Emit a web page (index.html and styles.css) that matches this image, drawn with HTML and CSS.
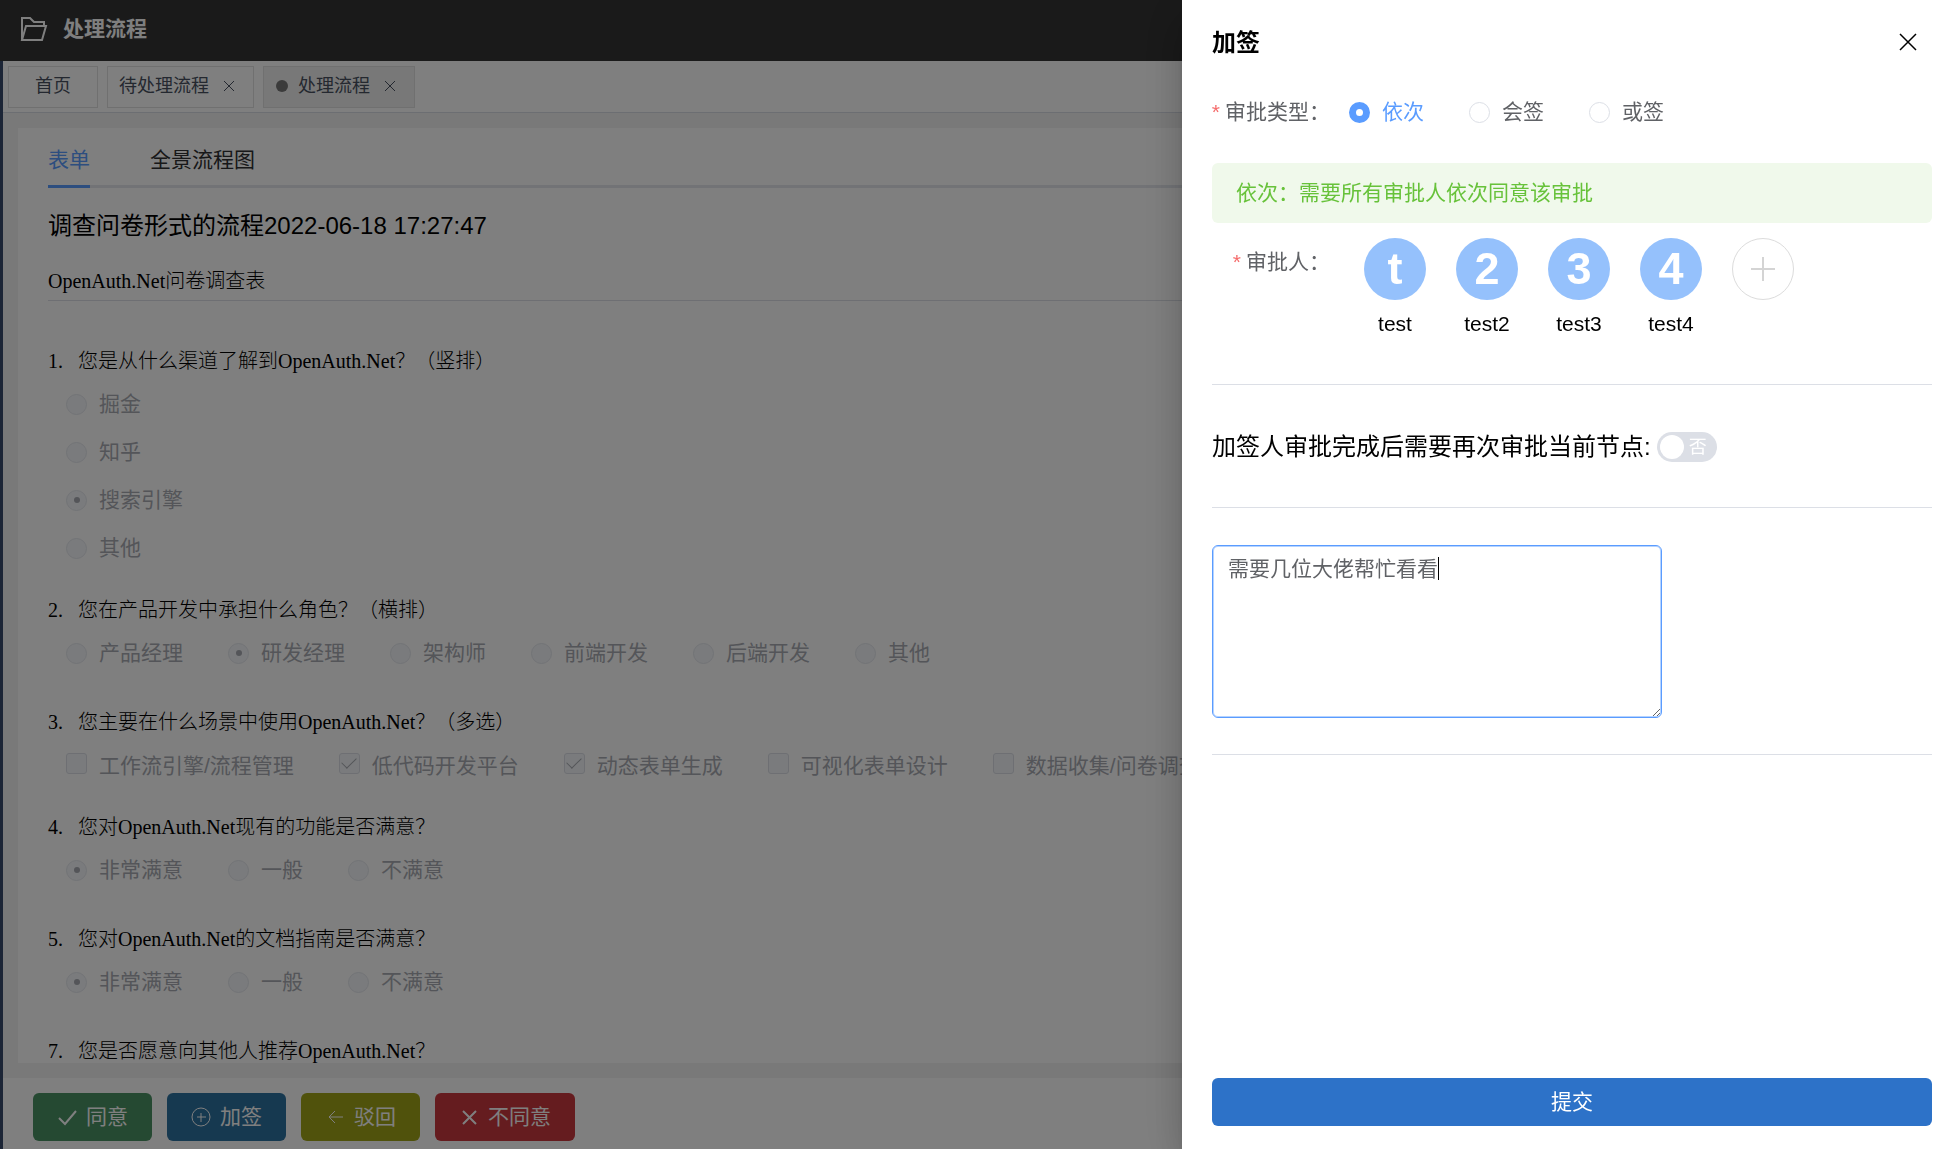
FILE: index.html
```html
<!DOCTYPE html>
<html lang="zh-CN">
<head>
<meta charset="utf-8">
<meta name="viewport" content="width=device-width, initial-scale=1">
<title>处理流程</title>
<link rel="stylesheet" href="styles.css">
</head>
<body>
<div class="app">
  <header class="topbar">
    <svg class="topbar-icon" viewBox="0 0 28 28" fill="none" stroke="currentColor" stroke-width="2" aria-hidden="true"><path d="M2 25V3h8l4 4h10v4M2 25l4-14h20l-4 14z"/></svg>
    <h1 class="topbar-title">处理流程</h1>
  </header>
  <div class="body">
    <aside class="sidebar"></aside>
    <main class="main">
      <nav class="tags">
        <a class="tag tag-home" href="#">首页</a>
        <a class="tag" href="#">待处理流程<svg class="tag-close" viewBox="0 0 12 12" aria-hidden="true"><path d="M1 1l10 10M11 1L1 11"/></svg></a>
        <a class="tag tag-active" href="#"><span class="tag-dot"></span>处理流程<svg class="tag-close" viewBox="0 0 12 12" aria-hidden="true"><path d="M1 1l10 10M11 1L1 11"/></svg></a>
      </nav>
      <section class="content">
        <div class="card">
          <div class="tabs">
            <button class="tab tab-active" type="button">表单</button>
            <button class="tab" type="button">全景流程图</button>
          </div>
          <h2 class="flow-title">调查问卷形式的流程2022-06-18 17:27:47</h2>
          <p class="form-title">OpenAuth.Net问卷调查表</p>
          <fieldset class="question question-stacked">
            <legend class="ask"><span class="num">1.</span>您是从什么渠道了解到OpenAuth.Net？（竖排）</legend>
            <div class="options options-column">
              <label class="option"><input type="radio" name="q1" disabled>掘金</label>
              <label class="option"><input type="radio" name="q1" disabled>知乎</label>
              <label class="option"><input type="radio" name="q1" disabled checked>搜索引擎</label>
              <label class="option"><input type="radio" name="q1" disabled>其他</label>
            </div>
          </fieldset>
          <fieldset class="question">
            <legend class="ask"><span class="num">2.</span>您在产品开发中承担什么角色？（横排）</legend>
            <div class="options">
              <label class="option"><input type="radio" name="q2" disabled>产品经理</label>
              <label class="option"><input type="radio" name="q2" disabled checked>研发经理</label>
              <label class="option"><input type="radio" name="q2" disabled>架构师</label>
              <label class="option"><input type="radio" name="q2" disabled>前端开发</label>
              <label class="option"><input type="radio" name="q2" disabled>后端开发</label>
              <label class="option"><input type="radio" name="q2" disabled>其他</label>
            </div>
          </fieldset>
          <fieldset class="question question-check">
            <legend class="ask"><span class="num">3.</span>您主要在什么场景中使用OpenAuth.Net？（多选）</legend>
            <div class="options">
              <label class="option"><input type="checkbox" disabled>工作流引擎/流程管理</label>
              <label class="option"><input type="checkbox" disabled checked>低代码开发平台</label>
              <label class="option"><input type="checkbox" disabled checked>动态表单生成</label>
              <label class="option"><input type="checkbox" disabled>可视化表单设计</label>
              <label class="option"><input type="checkbox" disabled>数据收集/问卷调查</label>
            </div>
          </fieldset>
          <fieldset class="question">
            <legend class="ask"><span class="num">4.</span>您对OpenAuth.Net现有的功能是否满意？</legend>
            <div class="options">
              <label class="option"><input type="radio" name="q4" disabled checked>非常满意</label>
              <label class="option"><input type="radio" name="q4" disabled>一般</label>
              <label class="option"><input type="radio" name="q4" disabled>不满意</label>
            </div>
          </fieldset>
          <fieldset class="question">
            <legend class="ask"><span class="num">5.</span>您对OpenAuth.Net的文档指南是否满意？</legend>
            <div class="options">
              <label class="option"><input type="radio" name="q5" disabled checked>非常满意</label>
              <label class="option"><input type="radio" name="q5" disabled>一般</label>
              <label class="option"><input type="radio" name="q5" disabled>不满意</label>
            </div>
          </fieldset>
          <fieldset class="question">
            <legend class="ask"><span class="num">7.</span>您是否愿意向其他人推荐OpenAuth.Net？</legend>
          </fieldset>
        </div>
      </section>
      <footer class="actions">
        <button class="btn btn-agree" type="button"><svg viewBox="0 0 21 21" stroke-width="2" aria-hidden="true"><path d="M2 11l6 6L19 4"/></svg>同意</button>
        <button class="btn btn-sign" type="button"><svg viewBox="0 0 21 21" stroke-width="1" aria-hidden="true"><circle cx="10" cy="10" r="9"/><path d="M6 10h9M10 6v9"/></svg>加签</button>
        <button class="btn btn-back" type="button"><svg viewBox="0 0 21 21" stroke-width="1" aria-hidden="true"><path d="M18 10H4M10 4l-6 6 6 6"/></svg>驳回</button>
        <button class="btn btn-deny" type="button"><svg viewBox="0 0 21 21" stroke-width="2" aria-hidden="true"><path d="M4 4l13 13M17 4L4 17"/></svg>不同意</button>
      </footer>
    </main>
  </div>
</div>

<div class="mask">
  <form class="drawer">
    <div class="drawer-head">
      <h2 class="drawer-title">加签</h2>
      <button class="close" type="button" aria-label="关闭"><svg viewBox="0 0 18 18" aria-hidden="true"><path d="M1 1l16 16M17 1L1 17"/></svg></button>
    </div>
    <div class="row" role="radiogroup" aria-labelledby="type-label">
      <span class="label" id="type-label"><span class="star">*</span>审批类型：</span>
      <div class="choices">
        <label class="choice"><input type="radio" name="type" checked><span>依次</span></label>
        <label class="choice"><input type="radio" name="type"><span>会签</span></label>
        <label class="choice"><input type="radio" name="type"><span>或签</span></label>
      </div>
    </div>
    <p class="tip">依次：需要所有审批人依次同意该审批</p>
    <div class="row row-people">
      <span class="label"><span class="star">*</span>审批人：</span>
      <ul class="people">
        <li class="person"><span class="avatar">t</span>test</li>
        <li class="person"><span class="avatar">2</span>test2</li>
        <li class="person"><span class="avatar">3</span>test3</li>
        <li class="person"><span class="avatar">4</span>test4</li>
        <li class="person"><button class="add" type="button" aria-label="添加审批人"><svg viewBox="0 0 24 24" aria-hidden="true"><path d="M0 12h24M12 0v24"/></svg></button></li>
      </ul>
    </div>
    <div class="again">
      <label for="again">加签人审批完成后需要再次审批当前节点:</label>
      <span class="switch"><input type="checkbox" role="switch" id="again"><span class="switch-text">否</span></span>
    </div>
    <div class="note">
      <textarea class="note-input" aria-label="加签说明">需要几位大佬帮忙看看</textarea>
      <span class="caret"></span>
    </div>
    <button class="submit" type="submit">提交</button>
  </form>
</div>
</body>
</html>
```
FILE: styles.css
```css
* { box-sizing: border-box; }
body {
  margin: 0;
  font: 21px/24px "Liberation Sans", "Noto Sans CJK SC", sans-serif;
  color: #000;
}
h1, h2, p, ul, fieldset { margin: 0; padding: 0; border: 0; }
ul { list-style: none; }
button, textarea, input { font: inherit; margin: 0; }
a { color: inherit; text-decoration: none; }
svg { fill: none; stroke: currentColor; flex: none; }

.app { height: 100vh; display: flex; flex-direction: column; overflow: hidden; }
.topbar {
  height: 61px;
  flex: none;
  display: flex;
  align-items: center;
  gap: 15px;
  padding: 0 20px 4px;
  background: #343434;
  color: #fff;
}
.topbar-icon { width: 28px; height: 28px; }
.topbar-title { font-size: 21px; line-height: 24px; }
.body { flex: 1; display: flex; min-height: 0; }
.sidebar { width: 3px; flex: none; background: #384a6c; }
.main { flex: 1; min-width: 0; display: flex; flex-direction: column; }

.tags {
  flex: none;
  display: flex;
  gap: 9px;
  padding: 5px;
  height: 52px;
  border-bottom: 1px solid #d8dce5;
  background: #fff;
}
.tag {
  height: 42px;
  display: flex;
  align-items: center;
  padding: 0 18px 2px 11px;
  border: 1px solid #e0e0e0;
  font-size: 18px;
  color: #495060;
}
.tag-home { padding: 0 26px 2px; }
.tag-active { background: #f0f0f0; }
.tag-dot { width: 12px; height: 12px; border-radius: 50%; background: #777; margin: 0 10px 0 1px; }
.tag-close { width: 12px; height: 12px; margin-left: 14px; stroke-width: 1; }

.content { flex: 1; min-height: 0; padding: 15px; background: #f2f2f2; }
.card { height: 100%; overflow: hidden; background: #fff; padding: 0 30px; }
.tabs { display: flex; gap: 60px; height: 60px; border-bottom: 3px solid #e4e7ed; }
.tab {
  height: 60px;
  padding: 6px 0 0;
  border: 0;
  border-bottom: 3px solid transparent;
  background: none;
  color: #303133;
}
.tab-active { color: #5a9cff; border-color: #5a9cff; }
.flow-title { font-size: 24px; line-height: 30px; font-weight: 400; margin-top: 23px; }
.form-title {
  font: 300 20px/24px "Liberation Serif", "Noto Sans CJK SC", serif;
  padding: 28px 0 7px;
  border-bottom: 1px solid #dcdfe6;
  margin-bottom: 40px;
}
.question { margin-bottom: 25px; }
.question-stacked { margin-bottom: 18px; }
.question-check { margin-bottom: 18px; }
.ask { font: 300 20px/40px "Liberation Serif", "Noto Sans CJK SC", serif; padding: 0; }
.num { display: inline-block; width: 30px; }
.options { display: flex; gap: 45px; margin-top: -1px; padding-left: 18px; }
.options-column { flex-direction: column; gap: 0; }
.option {
  display: flex;
  align-items: center;
  gap: 12px;
  height: 48px;
  flex: none;
  white-space: nowrap;
  color: #a8abb2;
}
.option input {
  appearance: none;
  width: 21px;
  height: 21px;
  display: grid;
  place-items: center;
  border: 1px solid #e4e7ed;
  border-radius: 50%;
  background: #f5f7fa;
}
.question-check .option { padding-top: 2px; }
.option input[type="checkbox"] { margin-bottom: 6px; border-color: #dcdfe6; border-radius: 3px; }
.option input[type="radio"]:checked::before {
  content: "";
  width: 6px;
  height: 6px;
  border-radius: 50%;
  background: #a8abb2;
}
.option input[type="checkbox"]:checked::before {
  content: "";
  width: 7px;
  height: 13px;
  margin-bottom: 4px;
  border: solid #a8abb2;
  border-width: 0 1px 1px 0;
  transform: rotate(45deg);
}

.actions { flex: none; display: flex; gap: 15px; height: 71px; padding: 15px 30px 8px; background: #fff; }
.btn {
  height: 48px;
  display: flex;
  align-items: center;
  gap: 8px;
  padding: 0 24px;
  border: 0;
  border-radius: 6px;
  color: #fff;
  white-space: nowrap;
}
.btn svg { width: 21px; height: 21px; }
.btn-agree { background: #4a9264; }
.btn-sign { background: #2d72a0; }
.btn-back { background: #a0a418; }
.btn-deny { background: #ca383e; }

.mask { position: fixed; inset: 0; display: flex; justify-content: flex-end; background: rgba(0, 0, 0, 0.5); }
.drawer {
  width: 768px;
  height: 100%;
  display: flex;
  flex-direction: column;
  padding: 24px 18px 23px 30px;
  background: #fff;
  box-shadow: 0 12px 15px -8px rgba(0, 0, 0, 0.2), 0 24px 36px rgba(0, 0, 0, 0.14), 0 9px 45px rgba(0, 0, 0, 0.12);
}
.drawer-head { display: flex; justify-content: space-between; align-items: center; height: 36px; padding-right: 15px; }
.drawer-title { font-size: 24px; line-height: 36px; padding-top: 2px; }
.close { display: flex; padding: 0; border: 0; background: none; color: #000; }
.close svg { width: 18px; height: 18px; stroke-width: 1.5; }
.row { display: flex; align-items: center; height: 48px; margin-top: 28px; }
.label { display: flex; justify-content: flex-end; width: 120px; padding-right: 2px; flex: none; white-space: nowrap; color: #606266; }
.star { color: #f56c6c; margin-right: 5px; }
.choices { display: flex; gap: 45px; padding-left: 17px; }
.choice { display: flex; align-items: center; gap: 12px; color: #606266; }
.choice input {
  appearance: none;
  width: 21px;
  height: 21px;
  border: 1px solid #dcdfe6;
  border-radius: 50%;
  background: #fff;
}
.choice input:checked { border: 7px solid #5a9cff; }
.choice input:checked + span { color: #5a9cff; }
.tip { margin-top: 27px; height: 60px; line-height: 60px; padding: 0 24px; border-radius: 6px; background: #f0f9eb; color: #67c23a; }
.row-people { align-items: flex-start; height: 100px; margin-top: 15px; }
.row-people .label { padding-top: 12px; }
.people { display: flex; gap: 30px; padding-left: 32px; }
.person { display: flex; flex-direction: column; align-items: center; width: 62px; gap: 12px; }
.avatar, .add {
  width: 62px;
  height: 62px;
  display: grid;
  place-items: center;
  border-radius: 50%;
  background: #95c1fc;
  color: #fff;
  font-size: 45px;
  font-weight: 700;
}
.add { padding: 0; border: 1px solid #dcdcdc; background: #fff; color: #d4d4d4; }
.add svg { width: 24px; height: 24px; stroke-width: 2; }
.again {
  display: flex;
  align-items: center;
  gap: 6px;
  height: 124px;
  margin-top: 46px;
  padding-top: 1px;
  border: solid #dcdfe6;
  border-width: 1px 0;
  font-size: 24px;
}
.switch { display: grid; align-items: center; width: 60px; height: 30px; color: #fff; }
.switch input, .switch-text { grid-area: 1 / 1; }
.switch input {
  appearance: none;
  width: 60px;
  height: 30px;
  padding: 3px;
  border-radius: 15px;
  background: #dcdfe6;
}
.switch input::before { content: ""; display: block; width: 24px; height: 24px; border-radius: 50%; background: #fff; }
.switch-text { justify-self: end; padding-right: 10px; font-size: 18px; pointer-events: none; }
.note { position: relative; display: flex; padding: 37px 0 36px; border-bottom: 1px solid #dcdfe6; }
.note-input {
  width: 450px;
  height: 173px;
  padding: 7px 15px;
  border: 1px solid #5a9cff;
  border-radius: 6px;
  line-height: 31px;
  color: #606266;
  outline: none;
  resize: both;
  box-shadow: inset 0 0 0 1px #b5d3ff;
}
.caret { position: absolute; left: 226px; top: 49px; width: 1px; height: 23px; background: #000; }
.submit { height: 48px; flex: none; margin-top: auto; border: 0; border-radius: 6px; background: #2d72c8; color: #fff; }
```
